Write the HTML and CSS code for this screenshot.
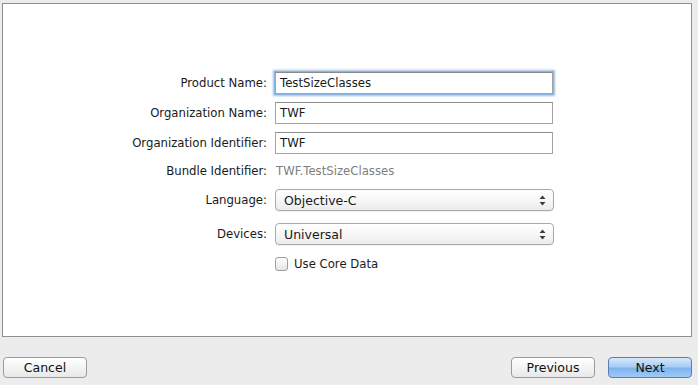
FILE: index.html
```html
<!DOCTYPE html>
<html lang="en">

<head>
    <meta charset="utf-8">
    <meta name="viewport" content="width=device-width, initial-scale=1.0">
    <title>Choose options for your new project</title>
    <link rel="stylesheet" href="styles.css">
</head>

<body>
    <section class="panel">
        <div class="form">
            <div class="row">
                <label class="lbl">Product Name:</label>
                <div class="field focus">TestSizeClasses</div>
            </div>

            <div class="row">
                <label class="lbl">Organization Name:</label>
                <div class="field">TWF</div>
            </div>

            <div class="row">
                <label class="lbl">Organization Identifier:</label>
                <div class="field">TWF</div>
            </div>

            <div class="row bundle">
                <label class="lbl">Bundle Identifier:</label>
                <div class="value">TWF.TestSizeClasses</div>
            </div>

            <div class="row lang">
                <label class="lbl">Language:</label>
                <div class="popup">
                    <span>Objective-C</span>
                    <svg width="7" height="11" viewBox="0 0 7 11"><path d="M3.5 0.5 L6.5 4 L0.5 4 Z M3.5 10.5 L6.5 7 L0.5 7 Z" fill="#3c3c3c"/></svg>
                </div>
            </div>

            <div class="row dev">
                <label class="lbl">Devices:</label>
                <div class="popup">
                    <span>Universal</span>
                    <svg width="7" height="11" viewBox="0 0 7 11"><path d="M3.5 0.5 L6.5 4 L0.5 4 Z M3.5 10.5 L6.5 7 L0.5 7 Z" fill="#3c3c3c"/></svg>
                </div>
            </div>

            <div class="row check">
                <span class="lbl"></span>
                <div class="check-row">
                    <span class="box"></span>
                    <span>Use Core Data</span>
                </div>
            </div>
        </div>
    </section>

    <footer class="footer">
        <button class="btn">Cancel</button>
        <div class="right">
            <button class="btn">Previous</button>
            <button class="btn primary">Next</button>
        </div>
    </footer>
</body>

</html>
```

FILE: styles.css
```css
body {
    margin: 0;
    background: #ececec;
    font-family: "DejaVu Sans", sans-serif;
    font-size: 11.7px;
    color: #1a1a1a;
}

.panel {
    box-sizing: border-box;
    height: 334px;
    margin: 3px 6px 0 2px;
    background: #fff;
    border: 1px solid #8f8f8f;
    padding-top: 68px;
}

.row {
    display: flex;
    align-items: center;
    gap: 8px;
    height: 22px;
    margin-top: 8px;
}

.row:first-child {
    margin-top: 0;
}

.lbl {
    width: 264px;
    flex: none;
    text-align: right;
}

.field {
    box-sizing: border-box;
    width: 278px;
    height: 22px;
    border: 1px solid #a4a4a4;
    border-top-color: #8c8c8c;
    padding: 0 0 0 4px;
    line-height: 20px;
    background: #fff;
}

.focus {
    box-shadow: 0 0 0 1px #8ab4e4, 0 0 2px 2px #9cc0ea;
}

.value {
    color: #808080;
    padding-left: 1px;
}

.bundle {
    height: 18px;
}

.lang {
    margin-top: 9px;
}

.dev {
    margin-top: 12px;
}

.check {
    height: 15px;
    margin-top: 11px;
}

.popup {
    box-sizing: border-box;
    width: 279px;
    height: 22px;
    display: flex;
    align-items: center;
    justify-content: space-between;
    padding: 0 7px 0 8px;
    border: 1px solid #a9a9a9;
    border-radius: 4px;
    background: linear-gradient(to bottom, #ffffff 0%, #f7f7f7 50%, #ececec 100%);
    box-shadow: 0 1px 0 rgba(0, 0, 0, .05);
    font-size: 12.5px;
}

.check-row {
    display: flex;
    align-items: center;
    gap: 6px;
}

.box {
    box-sizing: border-box;
    width: 13px;
    height: 14px;
    border: 1px solid #9e9e9e;
    border-radius: 3px;
    background: linear-gradient(to bottom, #fdfdfd, #e6e6e6);
}

.footer {
    display: flex;
    justify-content: space-between;
    padding: 20px 6px 0 3px;
}

.right {
    display: flex;
    gap: 13px;
}

.btn {
    box-sizing: border-box;
    width: 84px;
    height: 21px;
    padding: 0;
    border: 1px solid #9b9b9b;
    border-radius: 4px;
    background: linear-gradient(to bottom, #ffffff 0%, #f4f4f4 50%, #e8e8e8 100%);
    font-family: "DejaVu Sans", sans-serif;
    font-size: 12.5px;
    color: #111;
}

.primary {
    border-color: #5a7eb1;
    background: linear-gradient(to bottom, #d6e8fb 0%, #a8cdf4 45%, #7fb4ed 55%, #9fcaf6 100%);
}
```
